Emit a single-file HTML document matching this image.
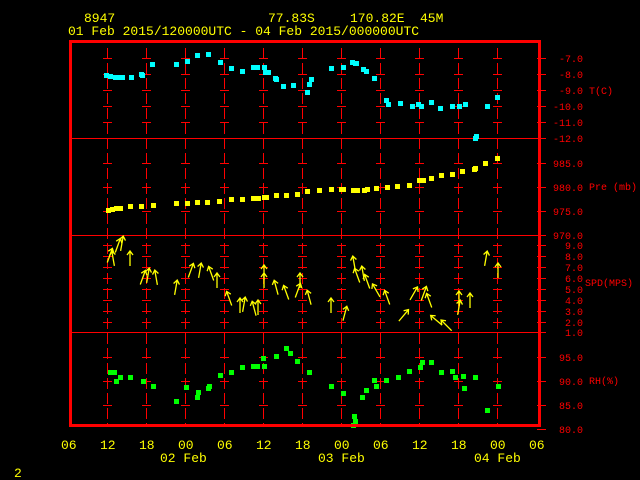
<!DOCTYPE html>
<html><head><meta charset="utf-8"><style>
html,body{margin:0;padding:0;background:#000;}
svg{display:block;}
text{font-family:"Liberation Mono",monospace;}
</style></head><body>
<svg id="s" width="640" height="480" xmlns="http://www.w3.org/2000/svg">
<rect width="640" height="480" fill="#000"/>
<g fill="#ffff00" font-size="13">
<text x="84" y="22">8947</text>
<text x="268" y="22">77.83S</text>
<text x="350" y="22">170.82E</text>
<text x="420" y="22">45M</text>
<text x="68" y="35">01 Feb 2015/120000UTC - 04 Feb 2015/000000UTC</text>
<text x="61" y="449">06</text><text x="100" y="449">12</text><text x="139" y="449">18</text>
<text x="178" y="449">00</text><text x="217" y="449">06</text><text x="256" y="449">12</text>
<text x="295" y="449">18</text><text x="334" y="449">00</text><text x="373" y="449">06</text>
<text x="412" y="449">12</text><text x="451" y="449">18</text><text x="490" y="449">00</text>
<text x="529" y="449">06</text>
<text x="160" y="462">02 Feb</text><text x="318" y="462">03 Feb</text><text x="474" y="462">04 Feb</text>
<text x="14" y="477">2</text>
</g>
<g id="grid"></g>
<g id="data"></g>
<g fill="#ff0000" font-size="10" text-anchor="end" id="lab"></g>
<g fill="#ff0000" font-size="10">
<text x="589" y="94">T(C)</text>
<text x="589" y="190">Pre (mb)</text>
<text x="585" y="286">SPD(MPS)</text>
<text x="589" y="384">RH(%)</text>
</g>
<rect x="70.5" y="41.5" width="469" height="384" fill="none" stroke="#ff0000" stroke-width="3"/>
</svg>
<script>
var NS="http://www.w3.org/2000/svg";
function el(p,t,a){var e=document.createElementNS(NS,t);for(var k in a)e.setAttribute(k,a[k]);document.getElementById(p).appendChild(e);return e;}
[138,235,332].forEach(function(y){el("grid","line",{x1:69,x2:545,y1:y+.5,y2:y+.5,stroke:"#ff0000","stroke-width":1});});
var xs=[107,146,185,224,263,302,341,380,419,458,497];
var ticks=[58,74,90,106,122,163,187,211,245,256,267,278,289,300,311,322,357,381,405];
xs.forEach(function(x,i){
 var c="#ff0000";
 el("grid","line",{x1:x+.5,x2:x+.5,y1:48,y2:426,stroke:c,"stroke-width":1,"stroke-dasharray":"11,4"});
 ticks.forEach(function(y){el("grid","line",{x1:x-4,x2:x+5,y1:y+.5,y2:y+.5,stroke:c,"stroke-width":1});});
});
var labs=[[58,"-7.0"],[74,"-8.0"],[90,"-9.0"],[106,"-10.0"],[122,"-11.0"],[138,"-12.0"],[163,"985.0"],[187,"980.0"],[211,"975.0"],[235,"970.0"],
[245,"9.0"],[256,"8.0"],[267,"7.0"],[278,"6.0"],[289,"5.0"],[300,"4.0"],[311,"3.0"],[322,"2.0"],[332,"1.0"],[357,"95.0"],[381,"90.0"],[405,"85.0"],[429,"80.0"]];
labs.forEach(function(l){el("grid","line",{x1:537,x2:546,y1:l[0]+.5,y2:l[0]+.5,stroke:"#ff0000"});var t=el("lab","text",{x:583,y:l[0]+4});t.textContent=l[1];});
function sq(pts,c){pts.forEach(function(p){el("data","rect",{x:p[0]-2,y:p[1]-2,width:5,height:5,fill:c});});}
sq([[106,75],[110,76],[115,77],[118,77],[122,77],[131,77],[141,74],[142,75],[152,64],[176,64],[187,61],[197,55],[208,54],[220,62],[231,68],[242,71],[253,67],[257,67],[264,67],[265,72],[268,72],[275,78],[276,79],[283,86],[293,85],[307,92],[309,84],[311,79],[331,68],[343,67],[352,62],[355,63],[356,63],[363,69],[366,71],[374,78],[386,100],[388,104],[400,103],[412,106],[418,104],[421,106],[431,102],[440,108],[452,106],[459,106],[465,104],[487,106],[497,97],[476,136],[475,138]],"#00ffff");
sq([[108,210],[112,209],[116,208],[120,208],[130,206],[141,206],[153,205],[176,203],[187,203],[197,202],[207,202],[219,201],[231,199],[242,199],[253,198],[258,198],[264,197],[266,197],[276,195],[286,195],[297,194],[307,191],[319,190],[331,189],[341,189],[343,189],[353,190],[357,190],[364,190],[367,189],[376,188],[387,187],[397,186],[409,185],[419,180],[423,180],[431,178],[441,175],[452,174],[462,171],[474,169],[475,168],[485,163],[497,158]],"#ffff00");
sq([[110,372],[114,372],[116,381],[120,377],[130,377],[143,381],[153,386],[176,401],[186,387],[198,392],[197,397],[208,388],[209,386],[220,375],[231,372],[242,367],[253,366],[257,366],[263,358],[264,366],[276,356],[286,348],[290,353],[297,361],[309,372],[331,386],[343,393],[354,416],[355,421],[353,425],[362,397],[366,390],[374,380],[376,386],[386,380],[398,377],[409,371],[420,367],[422,362],[431,362],[441,372],[452,371],[455,377],[463,376],[464,388],[475,377],[487,410],[498,386]],"#00ff00");
var w=[[110,255,20],[113,258,-10],[118,245,20],[122,243,10],[130,258,0],[143,277,20],[148,275,10],[156,277,-10],[176,287,10],[191,270,20],[200,270,10],[211,273,-20],[217,280,0],[229,298,-20],[240,305,0],[244,304,10],[254,308,-15],[258,307,0],[264,272,0],[264,280,0],[276,287,-15],[286,292,-20],[298,290,20],[300,280,0],[309,297,-15],[331,305,0],[345,313,15],[354,263,-10],[357,275,-20],[363,273,-10],[367,281,-20],[376,290,-30],[387,297,-20],[404,315,40],[414,293,30],[424,293,20],[429,300,-20],[436,320,-50],[446,325,-45],[459,307,10],[459,298,0],[470,300,0],[486,258,10],[498,270,0]];
w.forEach(function(a){var g=el("data","g",{transform:"translate("+a[0]+","+a[1]+") rotate("+a[2]+")",stroke:"#ffff00","stroke-width":1.3,fill:"none"});
 var p=document.createElementNS(NS,"path");p.setAttribute("d","M0,8 L0,-6 M-3,-3 L0,-7 L3,-3");g.appendChild(p);});
</script>
</body></html>
